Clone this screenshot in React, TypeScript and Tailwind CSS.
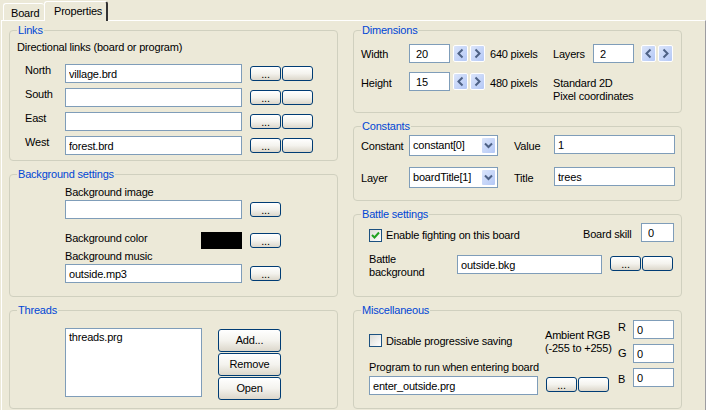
import type { ReactNode } from "react";

const Group = ({ title, className, children }: { title: string; className: string; children: ReactNode }) => (
  <div className={`border border-[#d0d0bf] rounded-[4px] ${className}`}>
    <div className="-mt-[8px] ml-[7px] mb-[1px] w-fit h-[14px] px-[1px] leading-[14px] bg-[#ece9d8] text-[#0046d5]">{title}</div>
    {children}
  </div>
);

const Field = ({ value = "", className }: { value?: string; className: string }) => (
  <input
    readOnly
    value={value}
    className={`block h-[19px] shrink-0 border border-[#7f9db9] bg-white px-[3px] text-black outline-none ${className}`}
  />
);

const Btn = ({ children, className = "w-[31px] h-[15px]" }: { children?: ReactNode; className?: string }) => (
  <button className={`block shrink-0 border border-[#003c74] rounded-[3px] bg-gradient-to-b from-white via-[#f4f3ee] to-[#dcd7cb] leading-none text-black ${className}`}>
    {children}
  </button>
);

const Dots = () => <Btn><span className="relative top-[1px]">...</span></Btn>;

const DotsPair = () => (
  <div className="flex gap-[1px]">
    <Dots />
    <Btn />
  </div>
);

const Spin = ({ dir }: { dir: "l" | "r" }) => (
  <div className="w-[15px] h-[17px] shrink-0 rounded-[2px] border border-white bg-gradient-to-br from-[#dbe5fa] to-[#b4c8f6] flex items-center justify-center">
    <svg width="9" height="11" viewBox="0 0 9 11" fill="none" stroke="#4d6185" strokeWidth="2">
      <path d={dir === "l" ? "M6.5 1.5 L2.5 5.5 L6.5 9.5" : "M2.5 1.5 L6.5 5.5 L2.5 9.5"} />
    </svg>
  </div>
);

const SpinPair = () => (
  <div className="flex gap-[2px]">
    <Spin dir="l" />
    <Spin dir="r" />
  </div>
);

const Combo = ({ value }: { value: string }) => (
  <div className="w-[89px] h-[21px] shrink-0 border border-[#7f9db9] bg-white flex items-center justify-between pl-[3px] pr-[1px]">
    <span>{value}</span>
    <div className="w-[15px] h-[17px] rounded-[2px] border border-white bg-gradient-to-br from-[#dbe5fa] to-[#b4c8f6] flex items-center justify-center">
      <svg width="9" height="7" viewBox="0 0 9 7" fill="none" stroke="#4d6185" strokeWidth="2">
        <path d="M1 1.5 L4.5 5 L8 1.5" />
      </svg>
    </div>
  </div>
);

const Check = ({ checked = false }: { checked?: boolean }) => (
  <div className="w-[13px] h-[13px] shrink-0 border border-[#1c5180] bg-gradient-to-br from-[#dcdcd7] to-white flex items-center justify-center">
    {checked && (
      <svg width="9" height="9" viewBox="0 0 9 9" fill="none" stroke="#21a121" strokeWidth="2">
        <path d="M1 4 L3.5 6.5 L8 1.5" />
      </svg>
    )}
  </div>
);

const LinkRow = ({ label, value }: { label: string; value?: string }) => (
  <div className="flex items-center h-[19px]">
    <span className="w-[40px] pl-[15px] box-content -translate-y-[3px]">{label}</span>
    <Field value={value} className="w-[177px]" />
    <div className="ml-[8px]"><DotsPair /></div>
  </div>
);

const rgbRows = [
  { label: "R", shift: "-translate-y-[2px]" },
  { label: "G", shift: "" },
  { label: "B", shift: "translate-y-[2px]" },
];

export default function App() {
  return (
    <div className="w-[706px] h-[410px] overflow-hidden bg-[#ece9d8] text-black text-[11px] tracking-[-0.2px] font-['Liberation_Sans',sans-serif]">
      <div className="h-[20px] flex items-end pl-[3px]">
        <div className="w-[41px] h-[17px] border-t border-l border-white rounded-t-[3px] pl-[7px] leading-[18px]">Board</div>
        <div className="w-[64px] h-[20px] border-t border-l border-r-2 border-t-white border-l-white border-r-[#333] rounded-t-[3px] pl-[9px] leading-[18px] -mb-[1px] relative bg-[#ece9d8]">Properties</div>
      </div>

      <div className="h-[390px] ml-[1px] border-t border-l border-t-white border-l-white border-r border-r-[#9d9da1] pl-[7px] pt-[9px] flex gap-[15px]">
        <div className="w-[329px] flex flex-col gap-[13px]">
          <Group title="Links" className="h-[131px]">
            <div className="pl-[7px] h-[26px] pt-[1px] leading-[16px]">Directional links (board or program)</div>
            <div className="flex flex-col gap-[5px]">
              <LinkRow label="North" value="village.brd" />
              <LinkRow label="South" />
              <LinkRow label="East" />
              <LinkRow label="West" value="forest.brd" />
            </div>
          </Group>

          <Group title="Background settings" className="h-[123px]">
            <div className="pl-[55px]">
              <div className="h-[18px] leading-[16px] pt-[2px]">Background image</div>
              <div className="flex items-center">
                <Field className="w-[177px]" />
                <div className="ml-[8px]"><Dots /></div>
              </div>
              <div className="flex items-center h-[17px] mt-[13px]">
                <span className="w-[136px] -translate-y-[2px]">Background color</span>
                <div className="w-[41px] h-[17px] bg-black" />
                <div className="ml-[8px]"><Dots /></div>
              </div>
              <div className="h-[15px] leading-[14px]">Background music</div>
              <div className="flex items-center">
                <Field value="outside.mp3" className="w-[177px]" />
                <div className="ml-[8px]"><Dots /></div>
              </div>
            </div>
          </Group>

          <Group title="Threads" className="h-[99px]">
            <div className="pl-[55px] pt-[10px] flex">
              <div className="w-[137px] h-[69px] border border-[#7f9db9] bg-white px-[3px] leading-[16px]">threads.prg</div>
              <div className="ml-[16px] mt-[1px] flex flex-col gap-[1px]">
                <Btn className="w-[63px] h-[23px]">Add...</Btn>
                <Btn className="w-[63px] h-[23px]">Remove</Btn>
                <Btn className="w-[63px] h-[23px]">Open</Btn>
              </div>
            </div>
          </Group>
        </div>

        <div className="w-[329px] flex flex-col gap-[13px]">
          <Group title="Dimensions" className="h-[83px]">
            <div className="flex pl-[7px] pt-[6px] h-[25px] items-center">
              <span className="w-[48px] translate-y-[1px]">Width</span>
              <Field value="20" className="w-[41px] pl-[6px]" />
              <div className="ml-[3px]"><SpinPair /></div>
              <span className="ml-[5px] w-[63px] translate-y-[1px]">640 pixels</span>
              <span className="w-[40px] translate-y-[1px]">Layers</span>
              <Field value="2" className="w-[41px] pl-[6px]" />
              <div className="ml-[7px]"><SpinPair /></div>
            </div>
            <div className="flex pl-[7px] mt-[9px] h-[19px] items-center">
              <span className="w-[48px] translate-y-[2px]">Height</span>
              <Field value="15" className="w-[41px] pl-[6px]" />
              <div className="ml-[3px]"><SpinPair /></div>
              <span className="ml-[5px] w-[63px] translate-y-[2px]">480 pixels</span>
              <span className="leading-[13px] whitespace-nowrap translate-y-[8px]">Standard 2D<br />Pixel coordinates</span>
            </div>
          </Group>

          <Group title="Constants" className="h-[75px]">
            <div className="flex pl-[7px] mt-[2px] h-[21px] items-start">
              <span className="w-[48px] leading-[22px]">Constant</span>
              <Combo value="constant[0]" />
              <span className="w-[40px] ml-[16px] leading-[22px]">Value</span>
              <Field value="1" className="w-[121px]" />
            </div>
            <div className="flex pl-[7px] h-[21px] mt-[11px] items-start">
              <span className="w-[48px] leading-[22px]">Layer</span>
              <Combo value="boardTitle[1]" />
              <span className="w-[40px] ml-[16px] leading-[22px]">Title</span>
              <Field value="trees" className="w-[121px]" />
            </div>
          </Group>

          <Group title="Battle settings" className="h-[83px]">
            <div className="flex pl-[15px] mt-[2px] h-[19px] items-center">
              <div className="translate-y-[3px]"><Check checked /></div>
              <span className="ml-[4px] w-[197px] translate-y-[3px]">Enable fighting on this board</span>
              <span className="w-[58px] translate-y-[2px]">Board skill</span>
              <Field value="0" className="w-[33px] pl-[6px]" />
            </div>
            <div className="flex pl-[15px] mt-[13px] h-[19px] items-start">
              <span className="w-[88px] leading-[13px] -mt-[2px]">Battle<br />background</span>
              <Field value="outside.bkg" className="w-[145px]" />
              <div className="ml-[8px] mt-[1px]"><DotsPair /></div>
            </div>
          </Group>

          <Group title="Miscellaneous" className="h-[99px]">
            <div className="flex pl-[15px] pt-[2px]">
              <div className="w-[249px]">
                <div className="flex items-center h-[13px] mt-[14px]">
                  <Check />
                  <span className="ml-[4px] w-[159px] shrink-0 translate-y-[1px]">Disable progressive saving</span>
                  <span className="leading-[13px] whitespace-nowrap translate-y-[1px]">Ambient RGB<br />(-255 to +255)</span>
                </div>
                <div className="mt-[13px] h-[16px] leading-[14px]">Program to run when entering board</div>
                <div className="flex">
                  <Field value="enter_outside.prg" className="w-[169px]" />
                  <div className="ml-[8px] mt-[1px]"><DotsPair /></div>
                </div>
              </div>
              <div className="flex flex-col gap-[5px]">
                {rgbRows.map((r) => (
                  <div key={r.label} className="flex h-[19px] items-center">
                    <span className={`w-[15px] ${r.shift}`}>{r.label}</span>
                    <Field value="0" className="w-[41px]" />
                  </div>
                ))}
              </div>
            </div>
          </Group>
        </div>
      </div>
    </div>
  );
}
